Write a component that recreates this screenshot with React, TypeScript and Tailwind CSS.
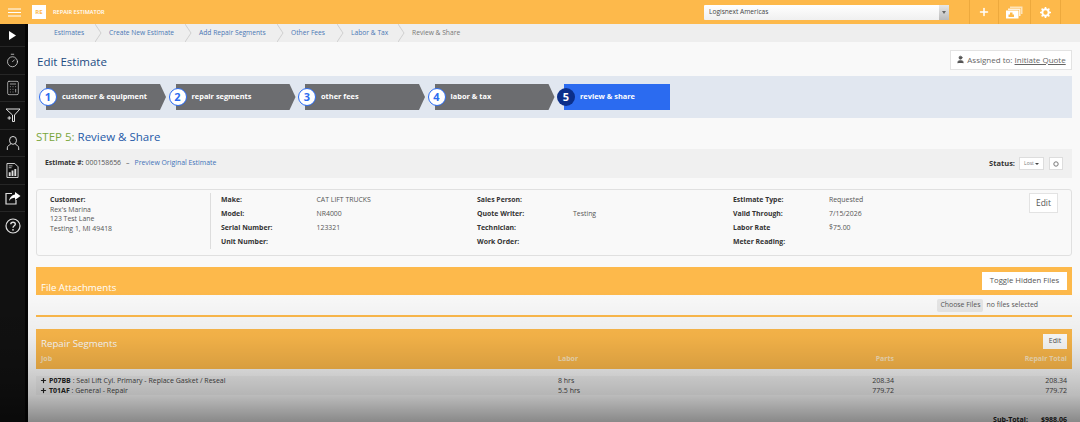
import { Calculator, Plus, Timer, User } from "lucide-react";

const crumbs = [
  { label: "Estimates", width: "w-[55px]" },
  { label: "Create New Estimate", width: "w-[90px]" },
  { label: "Add Repair Segments", width: "w-[92px]" },
  { label: "Other Fees", width: "w-[60px]" },
  { label: "Labor & Tax", width: "w-[61px]" },
];

const steps = [
  { n: 1, label: "customer & equipment" },
  { n: 2, label: "repair segments" },
  { n: 3, label: "other fees" },
  { n: 4, label: "labor & tax" },
];

const Label = ({ children }: { children: string }) => (
  <span className="font-bold text-[#333]">{children}</span>
);

const Row = ({ label, value, col }: { label: string; value?: string; col: string }) => (
  <div className="flex h-[14px] items-center">
    <div className={col}>
      <Label>{label}</Label>
    </div>
    <span className="text-[#555]">{value}</span>
  </div>
);

const Sidebar = () => (
  <div className="flex w-7 shrink-0 flex-col bg-[#111] border-r-[3px] border-[#050505] text-[#e0e0e0]">
    <div className="flex h-[23px] items-center justify-center border-b border-[#262626]">
      <svg width="9" height="9" viewBox="0 0 9 9">
        <path d="M1 0 L8 4.5 L1 9 Z" fill="#fff" />
      </svg>
    </div>
    <div className="flex h-[27.5px] items-center justify-center border-b border-[#262626]">
      <Timer size={15} strokeWidth={1.2} />
    </div>
    <div className="flex h-[27.5px] items-center justify-center border-b border-[#262626]">
      <Calculator size={16} strokeWidth={1} />
    </div>
    <div className="flex h-[27.5px] items-center justify-center border-b border-[#262626]">
      <svg width="16" height="16" viewBox="0 0 16 16" fill="none" stroke="currentColor" strokeWidth="1">
        <path d="M1 2 H15 L9.5 8 V14.5 H7.5 V8 Z" />
        <path d="M2.5 11 H6 M4.2 9.2 V12.8" />
      </svg>
    </div>
    <div className="flex h-[27.5px] items-center justify-center border-b border-[#262626]">
      <svg width="14" height="16" viewBox="0 0 16 17" fill="none" stroke="currentColor" strokeWidth="1.1">
        <ellipse cx="8" cy="5.5" rx="4" ry="4.5" />
        <path d="M1.5 16.5 V14 C1.5 11.5 4 11 5.5 9.5 M14.5 16.5 V14 C14.5 11.5 12 11 10.5 9.5" />
      </svg>
    </div>
    <div className="flex h-[27.5px] items-center justify-center border-b border-[#262626]">
      <svg width="13" height="15" viewBox="0 0 14 16" fill="none">
        <path d="M1 .5 H9.5 L13 4 V15.5 H1 Z" stroke="currentColor" />
        <path d="M3 3 H7 M3 5 H6" stroke="currentColor" strokeWidth=".8" />
        <path d="M3 10 H5 V14 H3 Z M6 8 H8 V14 H6 Z M9 6.5 H11 V14 H9 Z" fill="currentColor" />
      </svg>
    </div>
    <div className="flex h-[27.5px] items-center justify-center border-b border-[#262626]">
      <svg width="16" height="14" viewBox="0 0 16 14" fill="none">
        <path d="M11 9 V13 H1 V2.5 H7" stroke="currentColor" strokeWidth="1.2" />
        <path d="M10 1 L15.5 5 L10 9 V6.8 C7.5 6.8 5.5 7.5 4 10 C4.5 6.5 7 3.8 10 3.4 Z" fill="#fff" />
      </svg>
    </div>
    <div className="flex h-[27.5px] items-center justify-center">
      <svg width="16" height="16" viewBox="0 0 16 16" fill="none">
        <circle cx="8" cy="8" r="7" stroke="currentColor" strokeWidth="1.2" />
        <path d="M5.8 6.2 C5.8 3.6 10.3 3.6 10.3 6.2 C10.3 7.8 8 7.8 8 9.8" stroke="currentColor" strokeWidth="1.4" />
        <circle cx="8" cy="11.8" r=".9" fill="currentColor" />
      </svg>
    </div>
  </div>
);

export default function App() {
  return (
    <div className="relative flex h-[422px] w-[1080px] flex-col overflow-hidden bg-[#f9f9f9] font-['Open_Sans',sans-serif]">
      {/* top bar */}
      <div className="flex h-6 shrink-0 items-center bg-[#fdb94b] pr-[19px]">
        <div className="flex w-7 justify-center">
          <svg width="13" height="9" viewBox="0 0 13 9" stroke="#fff" strokeWidth="1.2">
            <path d="M0 1 H13 M0 4.5 H13 M0 8 H13" />
          </svg>
        </div>
        <div className="ml-[4px] flex h-[14px] w-[14px] items-center justify-center bg-white text-[6px] font-bold text-[#fdb94b]">
          RE
        </div>
        <span className="ml-[7px] whitespace-nowrap text-[5.6px] font-semibold text-white">REPAIR ESTIMATOR</span>
        <div className="ml-auto flex h-[15px] w-[245px] items-center rounded-[1px] bg-gradient-to-b from-white to-[#f0f0f0] text-[6.6px] text-[#444]">
          <span className="ml-[5px] flex-1">Logisnext Americas</span>
          <div className="flex h-full w-[10px] items-center justify-center bg-gradient-to-b from-[#e8e8e8] to-[#bbb]">
            <svg width="4" height="3" viewBox="0 0 4 3">
              <path d="M0 0 H4 L2 3 Z" fill="#666" />
            </svg>
          </div>
        </div>
        <div className="ml-5 flex h-full w-[30px] items-center justify-center border-x border-[#eda93d] text-white">
          <Plus size={12} strokeWidth={3} />
        </div>
        <div className="flex h-full w-[32px] items-center justify-center border-r border-[#eda93d]">
          <svg width="17" height="13" viewBox="0 0 17 13">
            <path d="M4 .5 H16.5 V8 H15 V2 H4 Z" fill="#fff" opacity=".6" />
            <path d="M2 2.5 H14.5 V10 H13 V4 H2 Z" fill="#fff" opacity=".8" />
            <path d="M0 4.5 H12.5 V12.5 H0 Z" fill="#fff" />
            <path d="M4 6.5 H6.5 V8.5 H8 V11 H2.5 V8.5 H4 Z" fill="#fdb94b" />
          </svg>
        </div>
        <div className="flex h-full w-[30px] items-center justify-center border-r border-[#eda93d]">
          <svg width="11" height="11" viewBox="0 0 11 11">
            <circle cx="5.5" cy="5.5" r="3.2" fill="none" stroke="#fff" strokeWidth="2" />
            <path d="M5.5 0 V11 M0 5.5 H11 M1.6 1.6 L9.4 9.4 M9.4 1.6 L1.6 9.4" stroke="#fff" strokeWidth="1.6" strokeDasharray="2 7" />
          </svg>
        </div>
      </div>

      <div className="flex min-h-0 flex-1">
        <Sidebar />

        <div className="min-w-0 flex-1">
          {/* breadcrumbs */}
          <div className="flex h-[18px] items-center whitespace-nowrap bg-[#eeeeee] pl-[26px] text-[6.7px] text-[#4a78b5]">
            {crumbs.map((c) => (
              <div key={c.label} className={`flex h-full items-center justify-between ${c.width}`}>
                <span>{c.label}</span>
                <svg className="mr-[7px]" width="7" height="18" viewBox="0 0 7 18" fill="none" stroke="#d0d0d0">
                  <path d="M0 0 L6 9 L0 18" />
                </svg>
              </div>
            ))}
            <span className="text-[#777]">Review &amp; Share</span>
          </div>

          <div className="pl-2 pr-2">
            {/* title */}
            <div className="flex h-[34px] items-center justify-between">
              <h1 className="ml-[1px] mt-[6px] text-[11.5px] leading-none text-[#1c4b82]">Edit Estimate</h1>
              <div className="mt-[1px] flex h-5 w-[122px] items-center justify-center gap-[2px] border border-[#e3e3e3] bg-white text-[8px] text-[#666]">
                <User size={9} fill="#555" stroke="#555" />
                <span>
                  Assigned to: <span className="underline">Initiate Quote</span>
                </span>
              </div>
            </div>

            {/* stepper */}
            <div className="flex h-[42px] items-center bg-[#e1e7f0] pl-[3px]">
              {steps.map((s) => (
                <div key={s.n} className="flex w-[129.5px] items-center">
                  <div className="z-10 -mr-[11px] flex h-[18px] w-[18px] shrink-0 items-center justify-center rounded-full border border-[#2b6bf0] bg-white text-[11px] font-bold text-[#2b6bf0]">
                    {s.n}
                  </div>
                  <div className="flex h-[26px] w-[120px] items-center bg-[#6c6d70] pl-[16px] text-[7.4px] font-bold text-white [clip-path:polygon(0_0,calc(100%-6px)_0,100%_50%,calc(100%-6px)_100%,0_100%)]">
                    {s.label}
                  </div>
                </div>
              ))}
              <div className="flex items-center">
                <div className="z-10 -mr-[11px] flex h-[18px] w-[18px] shrink-0 items-center justify-center rounded-full bg-[#0b2f8a] text-[11px] font-bold text-white">
                  5
                </div>
                <div className="flex h-[26px] w-[106px] items-center bg-[#2b6bf0] pl-[16px] text-[7.4px] font-bold text-white">
                  review &amp; share
                </div>
              </div>
            </div>

            {/* step heading */}
            <div className="flex h-[31px] items-center pt-[6px] text-[11.5px]">
              <span className="text-[#7aa63c]">STEP 5:&nbsp;</span>
              <span className="text-[#1e5aa8]">Review &amp; Share</span>
            </div>

            <div className="flex h-[29px] items-center justify-between bg-[#f0f0f0] pl-[9px] pr-[9px] text-[6.9px] text-[#555]">
              <div className="flex items-center">
                <Label>Estimate #:</Label>
                <span className="ml-[2px]">000158656</span>
                <span className="ml-[5px]">–</span>
                <span className="ml-[5px] text-[#3f72b8]">Preview Original Estimate</span>
              </div>
              <div className="flex items-center">
                <span className="text-[7.5px] font-bold text-[#333]">Status:</span>
                <div className="ml-[4px] flex h-[13px] w-[25px] items-center justify-center gap-[1px] border border-[#ddd] bg-white text-[5px] text-[#777]">
                  Lost
                  <svg width="4" height="2" viewBox="0 0 4 2">
                    <path d="M0 0 H4 L2 2 Z" fill="#444" />
                  </svg>
                </div>
                <div className="ml-[5px] flex h-[13px] w-[14px] items-center justify-center border border-[#ddd] bg-white">
                  <svg width="6" height="6" viewBox="0 0 6 6" fill="none" stroke="#777">
                    <circle cx="3" cy="3" r="2.2" />
                  </svg>
                </div>
              </div>
            </div>

            {/* estimate details */}
            <div className="mt-[11px] flex h-[67px] rounded-[3px] border border-[#e0e0e0] bg-[#f9f9f9] pt-[3px] text-[6.9px] leading-[9.5px] text-[#555]">
              <div className="ml-[13px] mr-[10px] h-[56px] w-[161px] border-r border-[#ddd] pt-[1px]">
                <div className="pt-[1px]">
                  <Label>Customer:</Label>
                </div>
                <div>Rex's Marina</div>
                <div>123 Test Lane</div>
                <div>Testing 1, MI 49418</div>
              </div>
              <div className="w-[256px]">
                <Row label="Make:" value="CAT LIFT TRUCKS" col="w-[95.5px]" />
                <Row label="Model:" value="NR4000" col="w-[95.5px]" />
                <Row label="Serial Number:" value="123321" col="w-[95.5px]" />
                <Row label="Unit Number:" col="w-[95.5px]" />
              </div>
              <div className="w-[256px]">
                <Row label="Sales Person:" col="w-[96px]" />
                <Row label="Quote Writer:" value="Testing" col="w-[96px]" />
                <Row label="Technician:" col="w-[96px]" />
                <Row label="Work Order:" col="w-[96px]" />
              </div>
              <div className="w-[296px]">
                <Row label="Estimate Type:" value="Requested" col="w-[96px]" />
                <Row label="Valid Through:" value="7/15/2026" col="w-[96px]" />
                <Row label="Labor Rate" value="$75.00" col="w-[96px]" />
                <Row label="Meter Reading:" col="w-[96px]" />
              </div>
              <div className="flex h-[20px] w-[29px] items-center justify-center border border-[#e3e3e3] bg-white text-[8.5px] text-[#555]">
                Edit
              </div>
            </div>

            {/* file attachments */}
            <div className="mt-[11px] flex h-[28px] items-end justify-between bg-[#fdb94b] px-[5px]">
              <span className="mb-[2px] text-[9.7px] leading-none text-white">File Attachments</span>
              <div className="mb-[5px] flex h-[18px] w-[85px] items-center justify-center bg-white text-[7.7px] text-[#555]">
                Toggle Hidden Files
              </div>
            </div>
            <div className="flex h-[22px] items-center justify-end border-b-2 border-[#fdb94b] pr-[34px] pt-[1px] text-[6.9px] text-[#555]">
              <span className="rounded-[2px] bg-[#e6e6e6] px-[3px] py-[1px]">Choose Files</span>
              <span className="ml-[3px]">no files selected</span>
            </div>

            {/* repair segments */}
            <div className="mt-[12px] h-[40px] bg-[#fdb94b] px-[5px] text-white">
              <div className="flex h-[25px] items-center justify-between">
                <span className="mt-[5px] text-[9.7px] leading-none">Repair Segments</span>
                <div className="flex h-[15px] w-[24px] items-center justify-center bg-white text-[7px] text-[#555]">
                  Edit
                </div>
              </div>
              <div className="flex h-[11px] items-center text-[7px] font-bold text-[#fbe3bb]">
                <span className="w-[517px]">Job</span>
                <span className="w-[173px]">Labor</span>
                <span className="w-[163px] text-right">Parts</span>
                <span className="flex-1 text-right">Repair Total</span>
              </div>
            </div>
            <div className="mt-[7px] pr-[5px] text-[7px] leading-[9.5px] text-[#444]">
              <div className="flex bg-black/[0.03]">
                <div className="flex w-[522px] items-center">
                  <Plus size={7} strokeWidth={4} className="ml-[4px] mr-[2px] text-[#222]" />
                  <span className="font-bold text-[#222]">P07BB</span>&nbsp;: Seal Lift Cyl. Primary - Replace Gasket / Reseal
                </div>
                <span className="w-[173px]">8 hrs</span>
                <span className="w-[163px] text-right">208.34</span>
                <span className="flex-1 text-right">208.34</span>
              </div>
              <div className="flex bg-black/[0.03]">
                <div className="flex w-[522px] items-center">
                  <Plus size={7} strokeWidth={4} className="ml-[4px] mr-[2px] text-[#222]" />
                  <span className="font-bold text-[#222]">T01AF</span>&nbsp;: General - Repair
                </div>
                <span className="w-[173px]">5.5 hrs</span>
                <span className="w-[163px] text-right">779.72</span>
                <span className="flex-1 text-right">779.72</span>
              </div>
              <div className="mt-[20px] flex justify-end gap-[13px]">
                <span className="font-bold text-[#222]">Sub-Total:</span>
                <span className="font-bold text-[#222]">$988.06</span>
              </div>
            </div>
          </div>
        </div>
      </div>

      {/* fade over the bottom of the page */}
      <div className="pointer-events-none absolute inset-x-0 bottom-0 h-[132px] bg-[linear-gradient(to_bottom,rgba(0,0,0,0)_0%,rgba(0,0,0,0.05)_35%,rgba(0,0,0,0.14)_58%,rgba(0,0,0,0.25)_80%,rgba(0,0,0,0.45)_100%)]" />
    </div>
  );
}
